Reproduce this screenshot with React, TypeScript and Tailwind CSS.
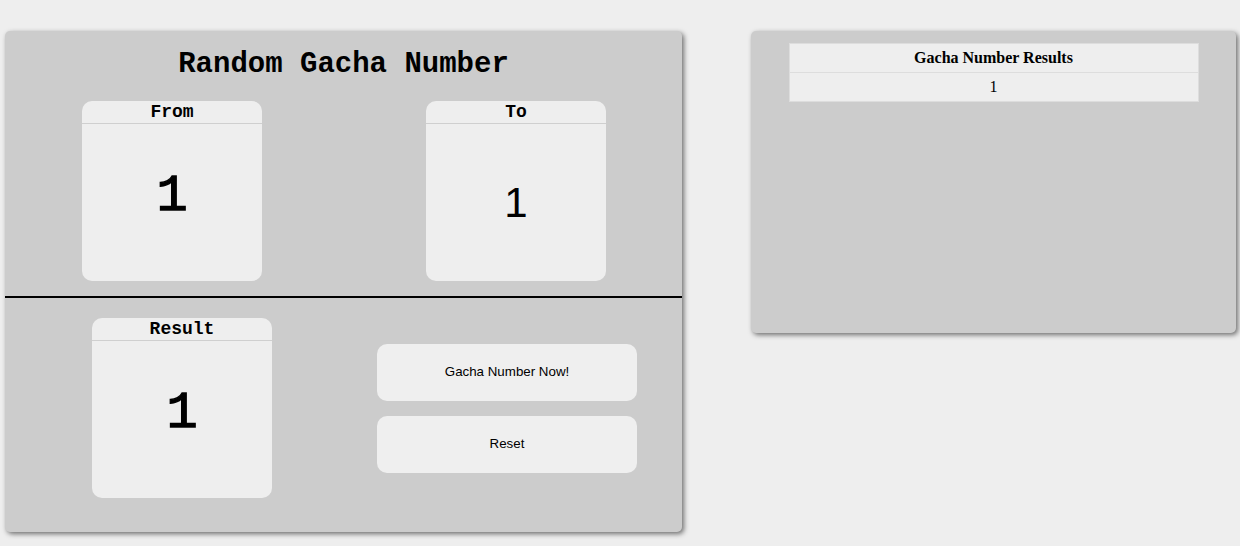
import { useState } from "react";

const mono = "font-['Liberation_Mono','Courier_New',monospace]";

type IBoxProps = {
  label: string;
  value: number;
  sans?: boolean;
};

const NumberBox = ({ label, value, sans }: IBoxProps) => {
  return (
    <div className="flex flex-col w-[180px] h-[180px] bg-[#eeeeee] rounded-[10px] overflow-hidden">
      <div
        className={`${mono} h-[23px] leading-[22px] text-[18px] font-bold text-black text-center border-b border-[#cfcfcf]`}
      >
        {label}
      </div>
      {sans ? (
        <div className="flex flex-1 items-center justify-center font-['Liberation_Sans',Arial,sans-serif] text-[42px] text-black">
          {value}
        </div>
      ) : (
        <div
          className={`${mono} flex flex-1 items-center justify-center pb-[12px] text-[52px] font-normal text-black [-webkit-text-stroke:1.3px_black]`}
        >
          {value}
        </div>
      )}
    </div>
  );
};

const App = () => {
  const [from] = useState<number>(1);
  const [to] = useState<number>(1);
  const [result, setResult] = useState<number>(1);
  const [history, setHistory] = useState<number[]>([1]);

  const handleGacha = () => {
    const n = Math.floor(Math.random() * (to - from + 1)) + from;
    setResult(n);
    setHistory([...history, n]);
  };

  const handleReset = () => {
    setResult(1);
    setHistory([]);
  };

  return (
    <div className="min-h-[546px] w-full bg-[#eeeeee] flex items-start pt-[31px]">
      {/* left panel */}
      <div className="ml-[5px] w-[677px] h-[501px] bg-[#cccccc] rounded-[5px] shadow-[2px_2px_5px_#707070] flex flex-col">
        <div
          className={`${mono} pt-[19px] h-[48px] leading-[29px] text-[29px] font-bold text-black text-center`}
        >
          Random Gacha Number
        </div>
        <div className="flex pl-[77px] gap-[164px] mt-[22px]">
          <NumberBox label="From" value={from} />
          <NumberBox label="To" value={to} sans />
        </div>
        <div className="mt-[15px] h-[2px] bg-black" />
        <div className="flex items-center pl-[87px] gap-[105px] mt-[20px]">
          <NumberBox label="Result" value={result} />
          <div className="flex flex-col gap-[15px]">
            <button
              onClick={handleGacha}
              className="w-[260px] h-[57px] rounded-[10px] bg-[#efefef] font-['Liberation_Sans',Arial,sans-serif] text-[13.33px] text-black"
            >
              Gacha Number Now!
            </button>
            <button
              onClick={handleReset}
              className="w-[260px] h-[57px] rounded-[10px] bg-[#efefef] font-['Liberation_Sans',Arial,sans-serif] text-[13.33px] text-black"
            >
              Reset
            </button>
          </div>
        </div>
      </div>

      {/* right panel */}
      <div className="ml-[69px] w-[485px] h-[302px] bg-[#cccccc] rounded-[5px] shadow-[2px_2px_5px_#707070] flex justify-center pt-[12px]">
        <table className="w-[410px] h-fit border-collapse bg-[#eeeeee] font-['Liberation_Serif','Times_New_Roman',serif] text-[16px] text-black">
          <thead>
            <tr>
              <th className="h-[29px] p-0 border border-[#dddddd] font-bold">
                Gacha Number Results
              </th>
            </tr>
          </thead>
          <tbody>
            {history.map((h, i) => (
              <tr key={i}>
                <td className="h-[29px] p-0 border border-[#dddddd] text-center">
                  {h}
                </td>
              </tr>
            ))}
          </tbody>
        </table>
      </div>
    </div>
  );
};

export default App;
